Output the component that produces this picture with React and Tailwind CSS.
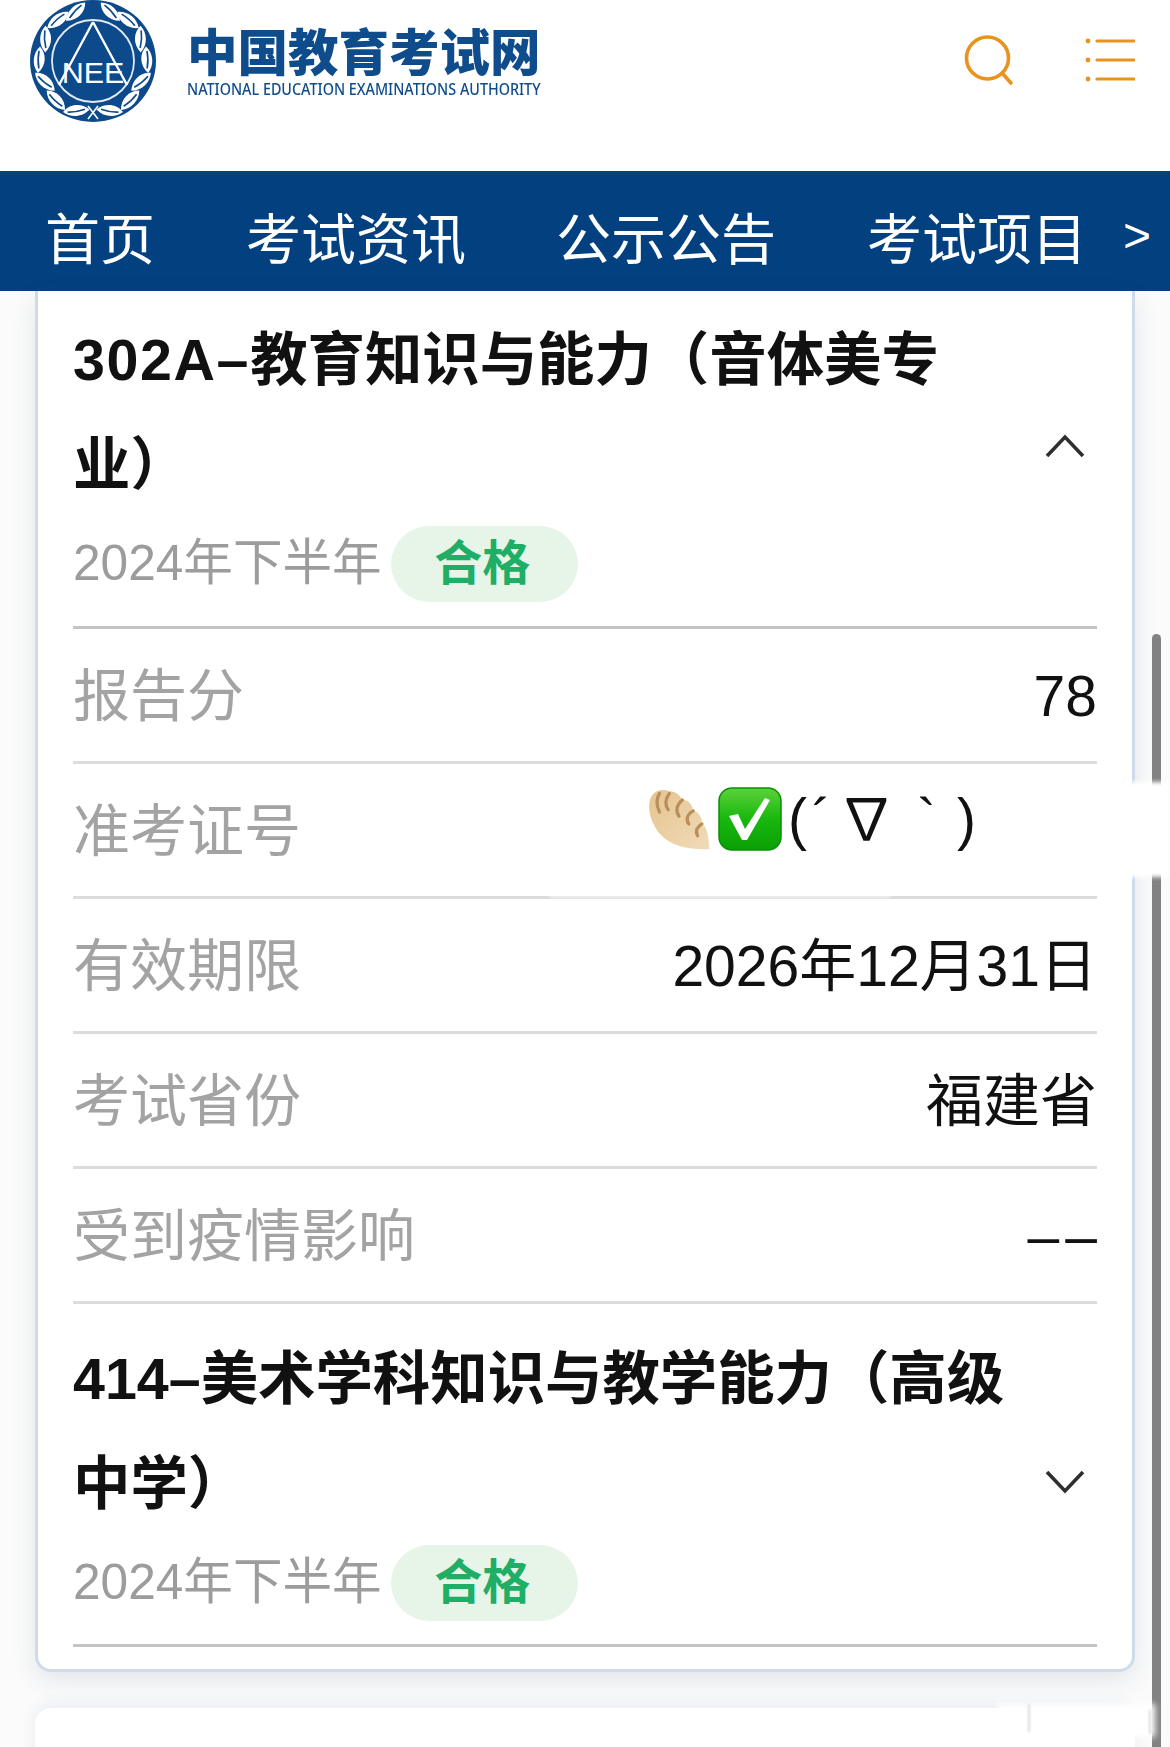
const FONT = '"Liberation Sans", "Noto Sans CJK SC", sans-serif';
const CJK = '"Noto Sans CJK SC", "Liberation Sans", sans-serif';

function Seal() {
  const angles = [16, 40, 64, 88, 112, 136, 158];
  const leaves = angles.map((t, i) => {
    const a = (t * Math.PI) / 180;
    const r = i % 2 ? 53 : 50;
    const x = 63 - r * Math.sin(a);
    const y = 61 + r * Math.cos(a);
    const rot = (Math.atan2(-Math.sin(a), -Math.cos(a)) * 180) / Math.PI + (i % 2 ? 14 : -14);
    return { x, y, rot };
  });
  const side = leaves.map((l, i) => (
    <g key={i} transform={`translate(${l.x} ${l.y}) rotate(${l.rot}) scale(1.15)`}>
      <path d="M-9 0C-3 -7 7 -8 14 -3C9 4 -1 6 -9 0Z" fill="#fff" />
      <path d="M-5 0C0 -2 6 -3 10 -3" stroke="#0d4a8b" strokeWidth="1.4" fill="none" />
    </g>
  ));
  return (
    <svg width="126" height="122" viewBox="0 0 126 122" className="block shrink-0">
      <ellipse cx="63" cy="61" rx="63" ry="61" fill="#0d4a8b" />
      {side}
      <g transform="translate(126 0) scale(-1 1)">{side}</g>
      <circle cx="63" cy="61" r="41" fill="#0d4a8b" stroke="#e3ebf4" strokeWidth="1.8" />
      <path d="M63 22L29 85M63 22L97 85" stroke="#fff" strokeWidth="2.4" fill="none" />
      <text x="0" y="83" textAnchor="middle" fill="#fff" fontSize="29" fontFamily="Liberation Sans" transform="translate(63 0) scale(1.05 1)">NEE</text>
      <path d="M58 106L68 119M68 106L58 119" stroke="#fff" strokeWidth="1.6" fill="none" />
    </svg>
  );
}

function SearchIcon() {
  return (
    <svg width="50" height="52" viewBox="0 0 50 52" fill="none" stroke="#e8931f" strokeWidth="3.6" strokeLinecap="round" className="block">
      <circle cx="23.5" cy="24" r="21" />
      <path d="M38 39L47 49" />
    </svg>
  );
}

function MenuIcon() {
  return (
    <svg width="50" height="44" viewBox="0 0 50 44" fill="none" stroke="#e8931f" className="block">
      <path d="M12 3H49M12 22H49M12 41H49" strokeWidth="3.2" strokeLinecap="round" />
      <circle cx="3" cy="3" r="2.4" fill="#e8931f" stroke="none" />
      <circle cx="3" cy="22" r="2.4" fill="#e8931f" stroke="none" />
      <circle cx="3" cy="41" r="2.4" fill="#e8931f" stroke="none" />
    </svg>
  );
}

function Chevron({ up }) {
  return (
    <svg width="40" height="24" viewBox="0 0 40 24" fill="none" stroke="#2f2f2f" strokeWidth="3.6" className="block">
      <path d={up ? "M2 22L20 3L38 22" : "M2 2L20 21L38 2"} />
    </svg>
  );
}

function Dumpling() {
  return (
    <svg width="66" height="62" viewBox="0 0 60 57" className="block shrink-0">
      <defs>
        <linearGradient id="dmp" x1="0" y1="0" x2="1" y2="1">
          <stop offset="0" stopColor="#e6c48f" />
          <stop offset="1" stopColor="#f0dbb8" />
        </linearGradient>
      </defs>
      <path d="M4 12C6 3 14 0 22 3C28 3 32 7 34 11C40 11 43 15 44 21C50 22 52 28 52 33C57 36 58 44 59 56C45 57 25 55 14 43C6 34 2 22 4 12Z" fill="url(#dmp)" />
      <path d="M13 5C10 10 10 16 13 22M22 5C18 10 18 16 21 20M34 11C28 16 28 22 31 26M44 21C38 24 37 30 40 33M52 33C47 36 46 40 48 44" stroke="#b98f5c" strokeWidth="3" strokeLinecap="round" fill="none" />
    </svg>
  );
}

function CheckBox() {
  return (
    <svg width="64" height="64" viewBox="0 0 64 64" className="block shrink-0">
      <defs>
        <linearGradient id="chk" x1="0" y1="0" x2="0" y2="1">
          <stop offset="0" stopColor="#5ed13a" />
          <stop offset="0.5" stopColor="#18b80e" />
          <stop offset="1" stopColor="#0b9f06" />
        </linearGradient>
      </defs>
      <rect x="1" y="1" width="62" height="62" rx="13" fill="url(#chk)" stroke="#0a8f08" strokeWidth="1.5" />
      <path d="M11 29L20 27L27 42L47 11L52 13L29 53H24Z" fill="#fff" />
    </svg>
  );
}

function Badge() {
  return (
    <span className="ml-[9px] flex h-[76px] w-[187px] items-center justify-center rounded-full bg-[#e7f5e8] pr-[4px] text-[48px] font-bold text-[#1fae66]">
      合格
    </span>
  );
}

function Head({ lines, open }) {
  return (
    <div className="relative">
      <div className="text-[57.4px] font-bold leading-[105px] text-[#111]">
        {lines.map((l, i) => (
          <div key={i} className="whitespace-nowrap">{l}</div>
        ))}
      </div>
      <div className="mt-[8px] flex h-[76px] items-center text-[49.6px] leading-none text-[#9c9c9c]">
        <span>2024年下半年</span>
        <Badge />
      </div>
      <div className={open ? "absolute right-[12px] top-[126px]" : "absolute right-[12px] top-[143px]"}>
        <Chevron up={open} />
      </div>
    </div>
  );
}

function Row({ label, children }) {
  return (
    <div className="flex h-[135px] items-center justify-between border-b-[3px] border-[#dcdcdc] pt-[3px] text-[57px] leading-none">
      <span className="text-[#a3a3a3]">{label}</span>
      {children}
    </div>
  );
}

export default function App() {
  return (
    <div className="relative h-[1747px] w-[1170px] overflow-hidden bg-[#fbfbfb]" style={{ fontFamily: FONT }}>
      <header className="flex h-[171px] items-start justify-between bg-white pl-[30px] pr-[35px]">
        <div className="flex items-start">
          <Seal />
          <div className="ml-[31px] mt-[19px] flex w-[354px] flex-col">
            <div className="whitespace-nowrap text-[50.5px] font-black leading-[60px] text-[#0f4c8c]" style={{ fontFamily: CJK }}>中国教育考试网</div>
            <div className="mt-[1px] origin-left scale-x-[0.87] whitespace-nowrap text-[16.5px] font-medium leading-[18px] text-[#0f4c8c]" style={{ fontFamily: '"Noto Sans", sans-serif' }}>NATIONAL EDUCATION EXAMINATIONS AUTHORITY</div>
          </div>
        </div>
        <div className="mt-[34px] flex items-start gap-[71px]">
          <SearchIcon />
          <div className="mt-[4px]"><MenuIcon /></div>
        </div>
      </header>

      <nav className="flex h-[120px] items-center bg-[#03407f] pl-[45px] pt-[9px] text-[55px] leading-none text-white" style={{ fontFamily: CJK }}>
        <span>首页</span>
        <span className="ml-[91px]">考试资讯</span>
        <span className="ml-[90px]">公示公告</span>
        <span className="ml-[91px]">考试项目</span>
        <span className="ml-[36px] text-[48px]" style={{ fontFamily: '"Liberation Sans", sans-serif' }}>&gt;</span>
      </nav>

      <section className="ml-[35px] h-[1381px] w-[1100px] rounded-b-[16px] border-x-[3px] border-b-[3px] border-[#cddbea] bg-white pl-[35px] pr-[35px] pt-[17px] shadow-[0_8px_24px_rgba(40,70,110,0.12)]">
        <div className="border-b-[3px] border-[#c4c4c4] pb-[24px]">
          <Head open lines={[<><span className="tracking-[1.6px]">302A–</span>教育知识与能力（音体美专</>, "业）"]} />
        </div>
        <Row label="报告分"><span className="text-[#111]">78</span></Row>
        <Row label="准考证号">
          <div className="mr-[121px] mt-[-25px] flex items-center text-[#111]">
            <Dumpling />
            <span className="ml-[7px]"><CheckBox /></span>
            <span className="ml-[6px] flex whitespace-pre">
              <span>(</span>
              <span className="ml-[5px]">´</span>
              <span className="ml-[7px]">∇</span>
              <span className="ml-[22px]">`</span>
              <span className="ml-[21px]">)</span>
            </span>
          </div>
        </Row>
        <Row label="有效期限"><span className="text-[#111]">2026年12月31日</span></Row>
        <Row label="考试省份"><span className="text-[#111]">福建省</span></Row>
        <Row label="受到疫情影响"><span className="-mr-[6px] tracking-[6px] text-[#111]">––</span></Row>
        <div className="border-b-[3px] border-[#c4c4c4] pb-[23px] pt-[23px]">
          <Head lines={["414–美术学科知识与教学能力（高级", "中学）"]} />
        </div>
      </section>

      <section className="ml-[35px] mt-[36px] h-[60px] w-[1100px] rounded-t-[16px] bg-white shadow-[0_-4px_16px_rgba(40,70,110,0.08)]" />

      <div className="absolute left-[1152px] top-[634px] h-[1113px] w-[9px] rounded-t-full bg-[#828282]" />
      <div className="absolute left-[1127px] top-[782px] h-[95px] w-[43px] bg-white blur-[2px]" />
      <div className="absolute left-[550px] top-[892px] h-[6px] w-[340px] bg-white/60 blur-[2px]" />
      <div className="absolute left-[997px] top-[1704px] h-[33px] w-[158px] bg-white blur-[3px]" />
      <div className="absolute left-[1028px] top-[1704px] h-[28px] w-[2px] bg-[#dcdcdc] blur-[1px]" />
      <div className="absolute left-[1149px] top-[1710px] h-[24px] w-[2px] bg-[#dcdcdc] blur-[1px]" />
    </div>
  );
}
